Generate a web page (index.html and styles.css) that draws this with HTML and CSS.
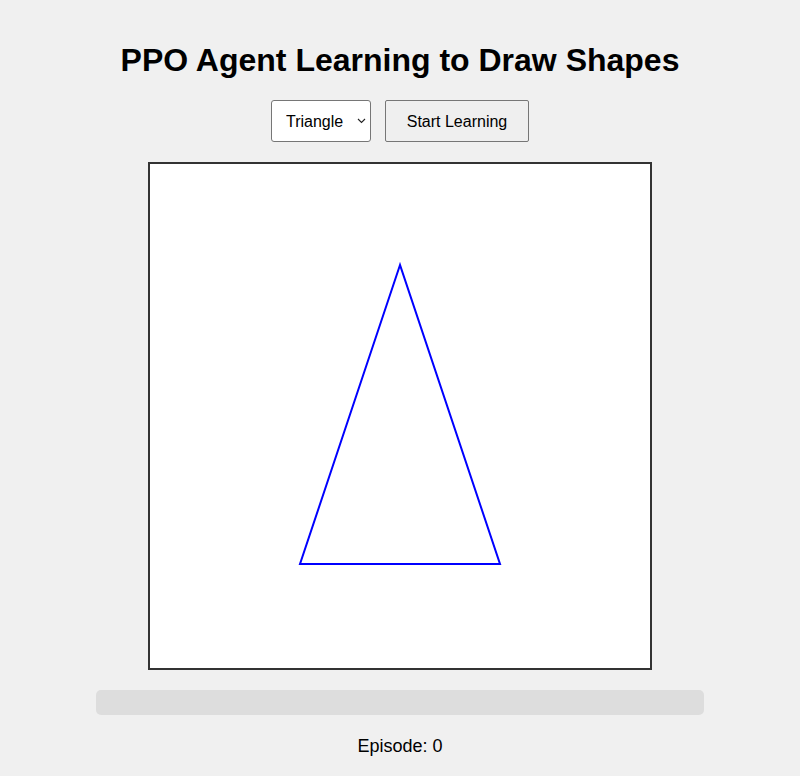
FILE: index.html
```html
<!DOCTYPE html>
<html>
<head>
<meta charset="utf-8">
<title>PPO Agent Learning to Draw Shapes</title>
<link rel="stylesheet" href="styles.css">
</head>
<body>
<div class="page">
  <h1 class="title">PPO Agent Learning to Draw Shapes</h1>
  <div class="controls">
    <span class="select-wrap">
      <select class="shape-select">
        <option>Triangle</option>
        <option>Square</option>
        <option>Circle</option>
      </select>
      <svg class="chevron" width="9" height="6" viewBox="0 0 9 6"><polyline points="1,1 4.5,4.5 8,1" fill="none" stroke="#222" stroke-width="1.1"/></svg>
    </span>
    <button class="start-btn">Start Learning</button>
  </div>
  <div class="canvas">
    <svg width="500" height="504" viewBox="0 0 500 504">
      <polygon points="250,101 150,400 350,400" fill="none" stroke="#0000ff" stroke-width="2"/>
    </svg>
  </div>
  <div class="progress"><div class="progress-fill" style="width:0%"></div></div>
  <div class="episode">Episode: 0</div>
</div>
</body>
</html>
```
FILE: styles.css
```css
html, body {
  margin: 0;
  padding: 0;
  background: #f0f0f0;
}
body {
  font-family: "Liberation Sans", Arial, sans-serif;
  color: #000;
}
.page {
  padding: 20px;
  display: flex;
  flex-direction: column;
  align-items: center;
}
.title {
  font-size: 32px;
  font-weight: bold;
  margin: 22px 0 21px;
  line-height: 37px;
}
.controls {
  display: flex;
  gap: 14px;
  height: 42px;
}
.select-wrap {
  position: relative;
  display: block;
  width: 100px;
  height: 42px;
}
.shape-select {
  -webkit-appearance: none;
  appearance: none;
  width: 100px;
  height: 42px;
  font-family: inherit;
  font-size: 16px;
  padding: 1px 8px 0 14px;
  background: #fff;
  border: 1px solid #767676;
  border-radius: 3px;
  color: #000;
}
.chevron {
  position: absolute;
  left: 86px;
  top: 18px;
  pointer-events: none;
}
.start-btn {
  width: 144px;
  height: 42px;
  font-family: inherit;
  font-size: 16px;
  background: #efefef;
  border: 1px solid #767676;
  border-radius: 2px;
  color: #000;
  padding: 2px 0 0;
}
.canvas {
  margin-top: 20px;
  width: 500px;
  height: 504px;
  border: 2px solid #333;
  background: #fff;
}
.canvas svg {
  display: block;
}
.progress {
  margin-top: 20px;
  width: 80%;
  height: 25px;
  background: #ddd;
  border-radius: 5px;
  overflow: hidden;
}
.progress-fill {
  height: 100%;
  background: #4caf50;
}
.episode {
  margin-top: 21px;
  font-size: 18px;
  line-height: 21px;
}
```
